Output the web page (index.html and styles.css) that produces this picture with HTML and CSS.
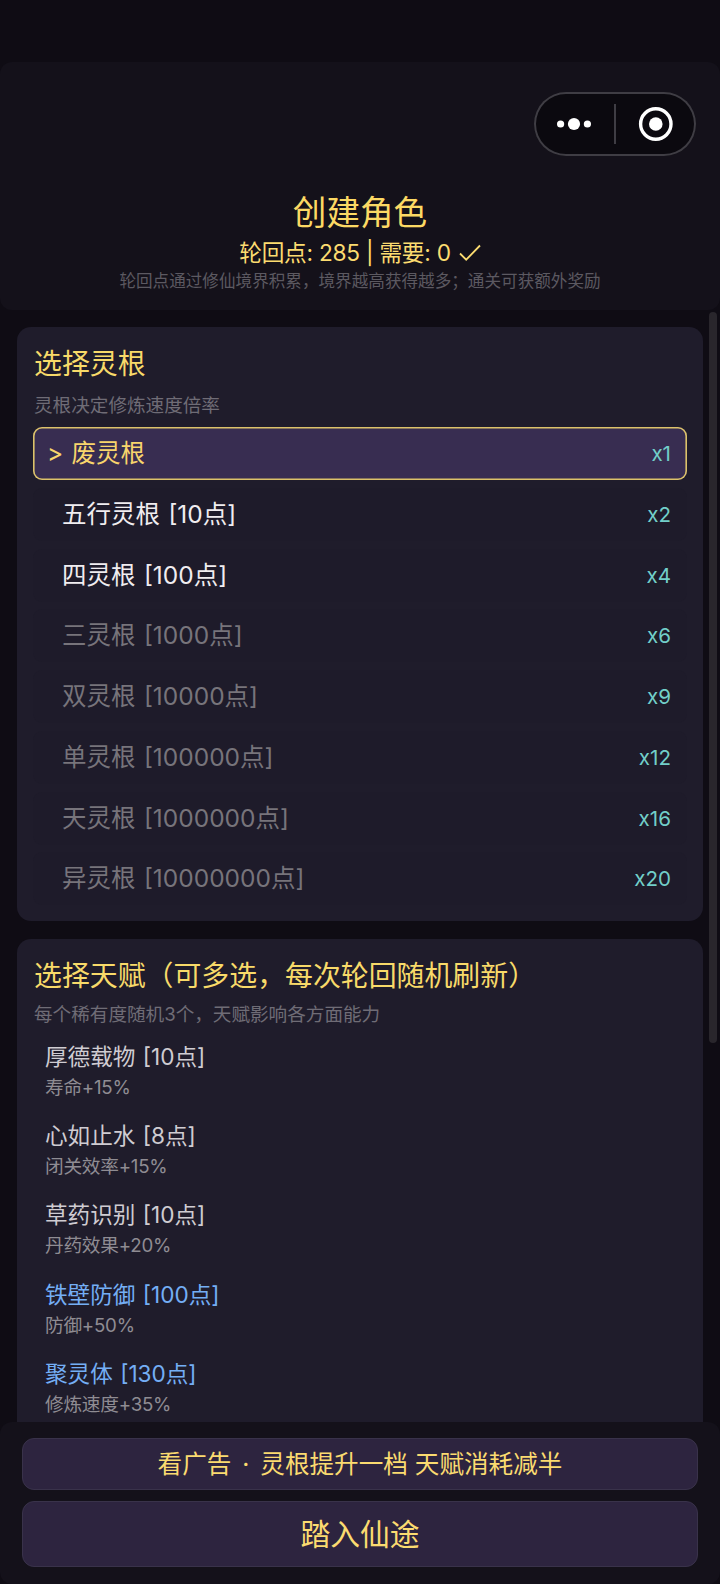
FILE: index.html
```html
<!DOCTYPE html>
<html lang="zh-CN">
<head>
<meta charset="utf-8">
<title>创建角色</title>
<link rel="stylesheet" href="styles.css">
</head>
<body>
<div class="app">
  <header class="header">
    <div class="capsule">
      <svg width="162" height="64" viewBox="0 0 162 64">
        <g fill="#fff"><circle cx="26.6" cy="32" r="3.6"/><circle cx="40" cy="32" r="6.1"/><circle cx="53.4" cy="32" r="3.6"/><circle cx="121.8" cy="32" r="6.8"/></g>
        <circle cx="121.8" cy="32" r="15.2" fill="none" stroke="#fff" stroke-width="3.4"/>
        <path d="M81 12v40" stroke="#3f3d44" stroke-width="2"/>
      </svg>
    </div>
    <h1 class="title">创建角色</h1>
    <div class="points"><span>轮回点: 285 | 需要: 0</span>
      <svg class="check" width="22" height="18" viewBox="0 0 22 18"><path d="M1 9.5l6.2 6.2L21 1.5" fill="none" stroke="currentColor" stroke-width="1.8"/></svg>
    </div>
    <p class="hint">轮回点通过修仙境界积累，境界越高获得越多；通关可获额外奖励</p>
  </header>
  <main class="content">
    <section class="card">
      <h2 class="heading">选择灵根</h2>
      <p class="desc">灵根决定修炼速度倍率</p>
      <ul class="roots">
        <li class="root selected"><span class="name">&gt; 废灵根</span><span class="rate">x1</span></li>
        <li class="root"><span class="name">五行灵根 [10点]</span><span class="rate">x2</span></li>
        <li class="root"><span class="name">四灵根 [100点]</span><span class="rate">x4</span></li>
        <li class="root locked"><span class="name">三灵根 [1000点]</span><span class="rate">x6</span></li>
        <li class="root locked"><span class="name">双灵根 [10000点]</span><span class="rate">x9</span></li>
        <li class="root locked"><span class="name">单灵根 [100000点]</span><span class="rate">x12</span></li>
        <li class="root locked"><span class="name">天灵根 [1000000点]</span><span class="rate">x16</span></li>
        <li class="root locked"><span class="name">异灵根 [10000000点]</span><span class="rate">x20</span></li>
      </ul>
    </section>
    <section class="card">
      <h2 class="heading">选择天赋（可多选，每次轮回随机刷新）</h2>
      <p class="desc desc-talent">每个稀有度随机3个，天赋影响各方面能力</p>
      <ul class="talents">
        <li class="talent"><span class="talent-name">厚德载物 [10点]</span><span class="effect">寿命+15%</span></li>
        <li class="talent"><span class="talent-name">心如止水 [8点]</span><span class="effect">闭关效率+15%</span></li>
        <li class="talent"><span class="talent-name">草药识别 [10点]</span><span class="effect">丹药效果+20%</span></li>
        <li class="talent rare"><span class="talent-name">铁壁防御 [100点]</span><span class="effect">防御+50%</span></li>
        <li class="talent rare"><span class="talent-name">聚灵体 [130点]</span><span class="effect">修炼速度+35%</span></li>
      </ul>
    </section>
    <div class="scrollbar"></div>
  </main>
  <footer class="footer">
    <button class="btn">看广告 <span class="dot">·</span> 灵根提升一档 天赋消耗减半</button>
    <button class="btn btn-main">踏入仙途</button>
  </footer>
</div>
</body>
</html>
```
FILE: styles.css
```css
* { box-sizing: border-box; margin: 0; padding: 0; }
body {
  background: #0f0c14;
  color: #f0edf0;
  font-family: Inter, "Noto Sans CJK SC", sans-serif;
  font-weight: 370;
}
ul { list-style: none; }
h1, h2 { font-weight: 370; }
.app { display: flex; flex-direction: column; height: 1584px; padding-top: 62px; overflow: hidden; }
.header {
  display: flex; flex-direction: column; align-items: center;
  height: 248px; padding-top: 30px;
  background: #14111a; border-radius: 12px;
}
.capsule {
  align-self: flex-end; width: 162px; height: 64px; margin-right: 24px;
  border-radius: 32px; background: #0b090f; box-shadow: inset 0 0 0 2px #3f3d44;
}
.capsule svg { display: block; }
.title { margin-top: 37px; font-size: 33.6px; line-height: 40px; color: #fcd964; }
.points { display: flex; align-items: center; gap: 8px; margin-top: 4px; font-size: 22.7px; line-height: 32px; letter-spacing: -0.25px; color: #fcdc70; white-space: nowrap; }
.hint { margin-top: 1px; font-size: 16.6px; line-height: 22px; color: #5c5961; white-space: nowrap; }
.content { position: relative; flex: 1; min-height: 0; overflow: hidden; padding: 17px 17px 0; }
.card { height: 594px; padding: 18px 16px 0; background: #1f1c2b; border-radius: 14px; }
.card + .card { margin-top: 18px; }
.heading { padding-left: 1px; font-size: 27.9px; line-height: 38px; color: #f8da69; white-space: nowrap; }
.desc { margin-top: 8px; padding-left: 1px; font-size: 18.6px; line-height: 28px; color: #6f6c76; white-space: nowrap; }
.desc-talent { margin-top: 5px; }
.roots { display: flex; flex-direction: column; gap: 7.75px; margin-top: 8px; }
.root {
  display: flex; align-items: center; justify-content: space-between;
  height: 53px; padding: 0 16px 0 29px;
  background: #1e1b2a; border-radius: 9px; white-space: nowrap;
}
.root.selected { padding-left: 14px; background: #382d51; box-shadow: inset 0 0 0 1.6px #dcc26a; color: #f8d56c; }
.locked { color: #77747b; }
.name { padding-bottom: 4px; font-size: 24.5px; word-spacing: 1.5px; }
.rate { font-size: 20.6px; font-weight: 400; color: #72cfc9; }
.talents { display: flex; flex-direction: column; margin-top: 12px; }
.talent { display: flex; flex-direction: column; height: 79.2px; padding-left: 12px; white-space: nowrap; }
.talent-name { font-size: 22.6px; line-height: 34px; word-spacing: 1px; color: #cfccd2; }
.effect { font-size: 18.7px; line-height: 28px; letter-spacing: -0.25px; color: #8f8c93; }
.rare .talent-name { color: #74aef5; }
.scrollbar { position: absolute; top: 2px; right: 3px; width: 8px; height: 731px; border-radius: 4px; background: #29262c; }
.footer { display: flex; flex-direction: column; gap: 11px; height: 162px; padding: 16px 22px 17px; background: #14111a; border-radius: 12px; }
.btn {
  height: 52px; padding-bottom: 4px; border: 1px solid #39324a; border-radius: 12px;
  background: #2d243f; color: #fbdb70; font: inherit; font-size: 24.6px; white-space: nowrap;
}
.dot { margin: 0 4px; }
.btn-main { height: 66px; font-size: 29.8px; }
```
